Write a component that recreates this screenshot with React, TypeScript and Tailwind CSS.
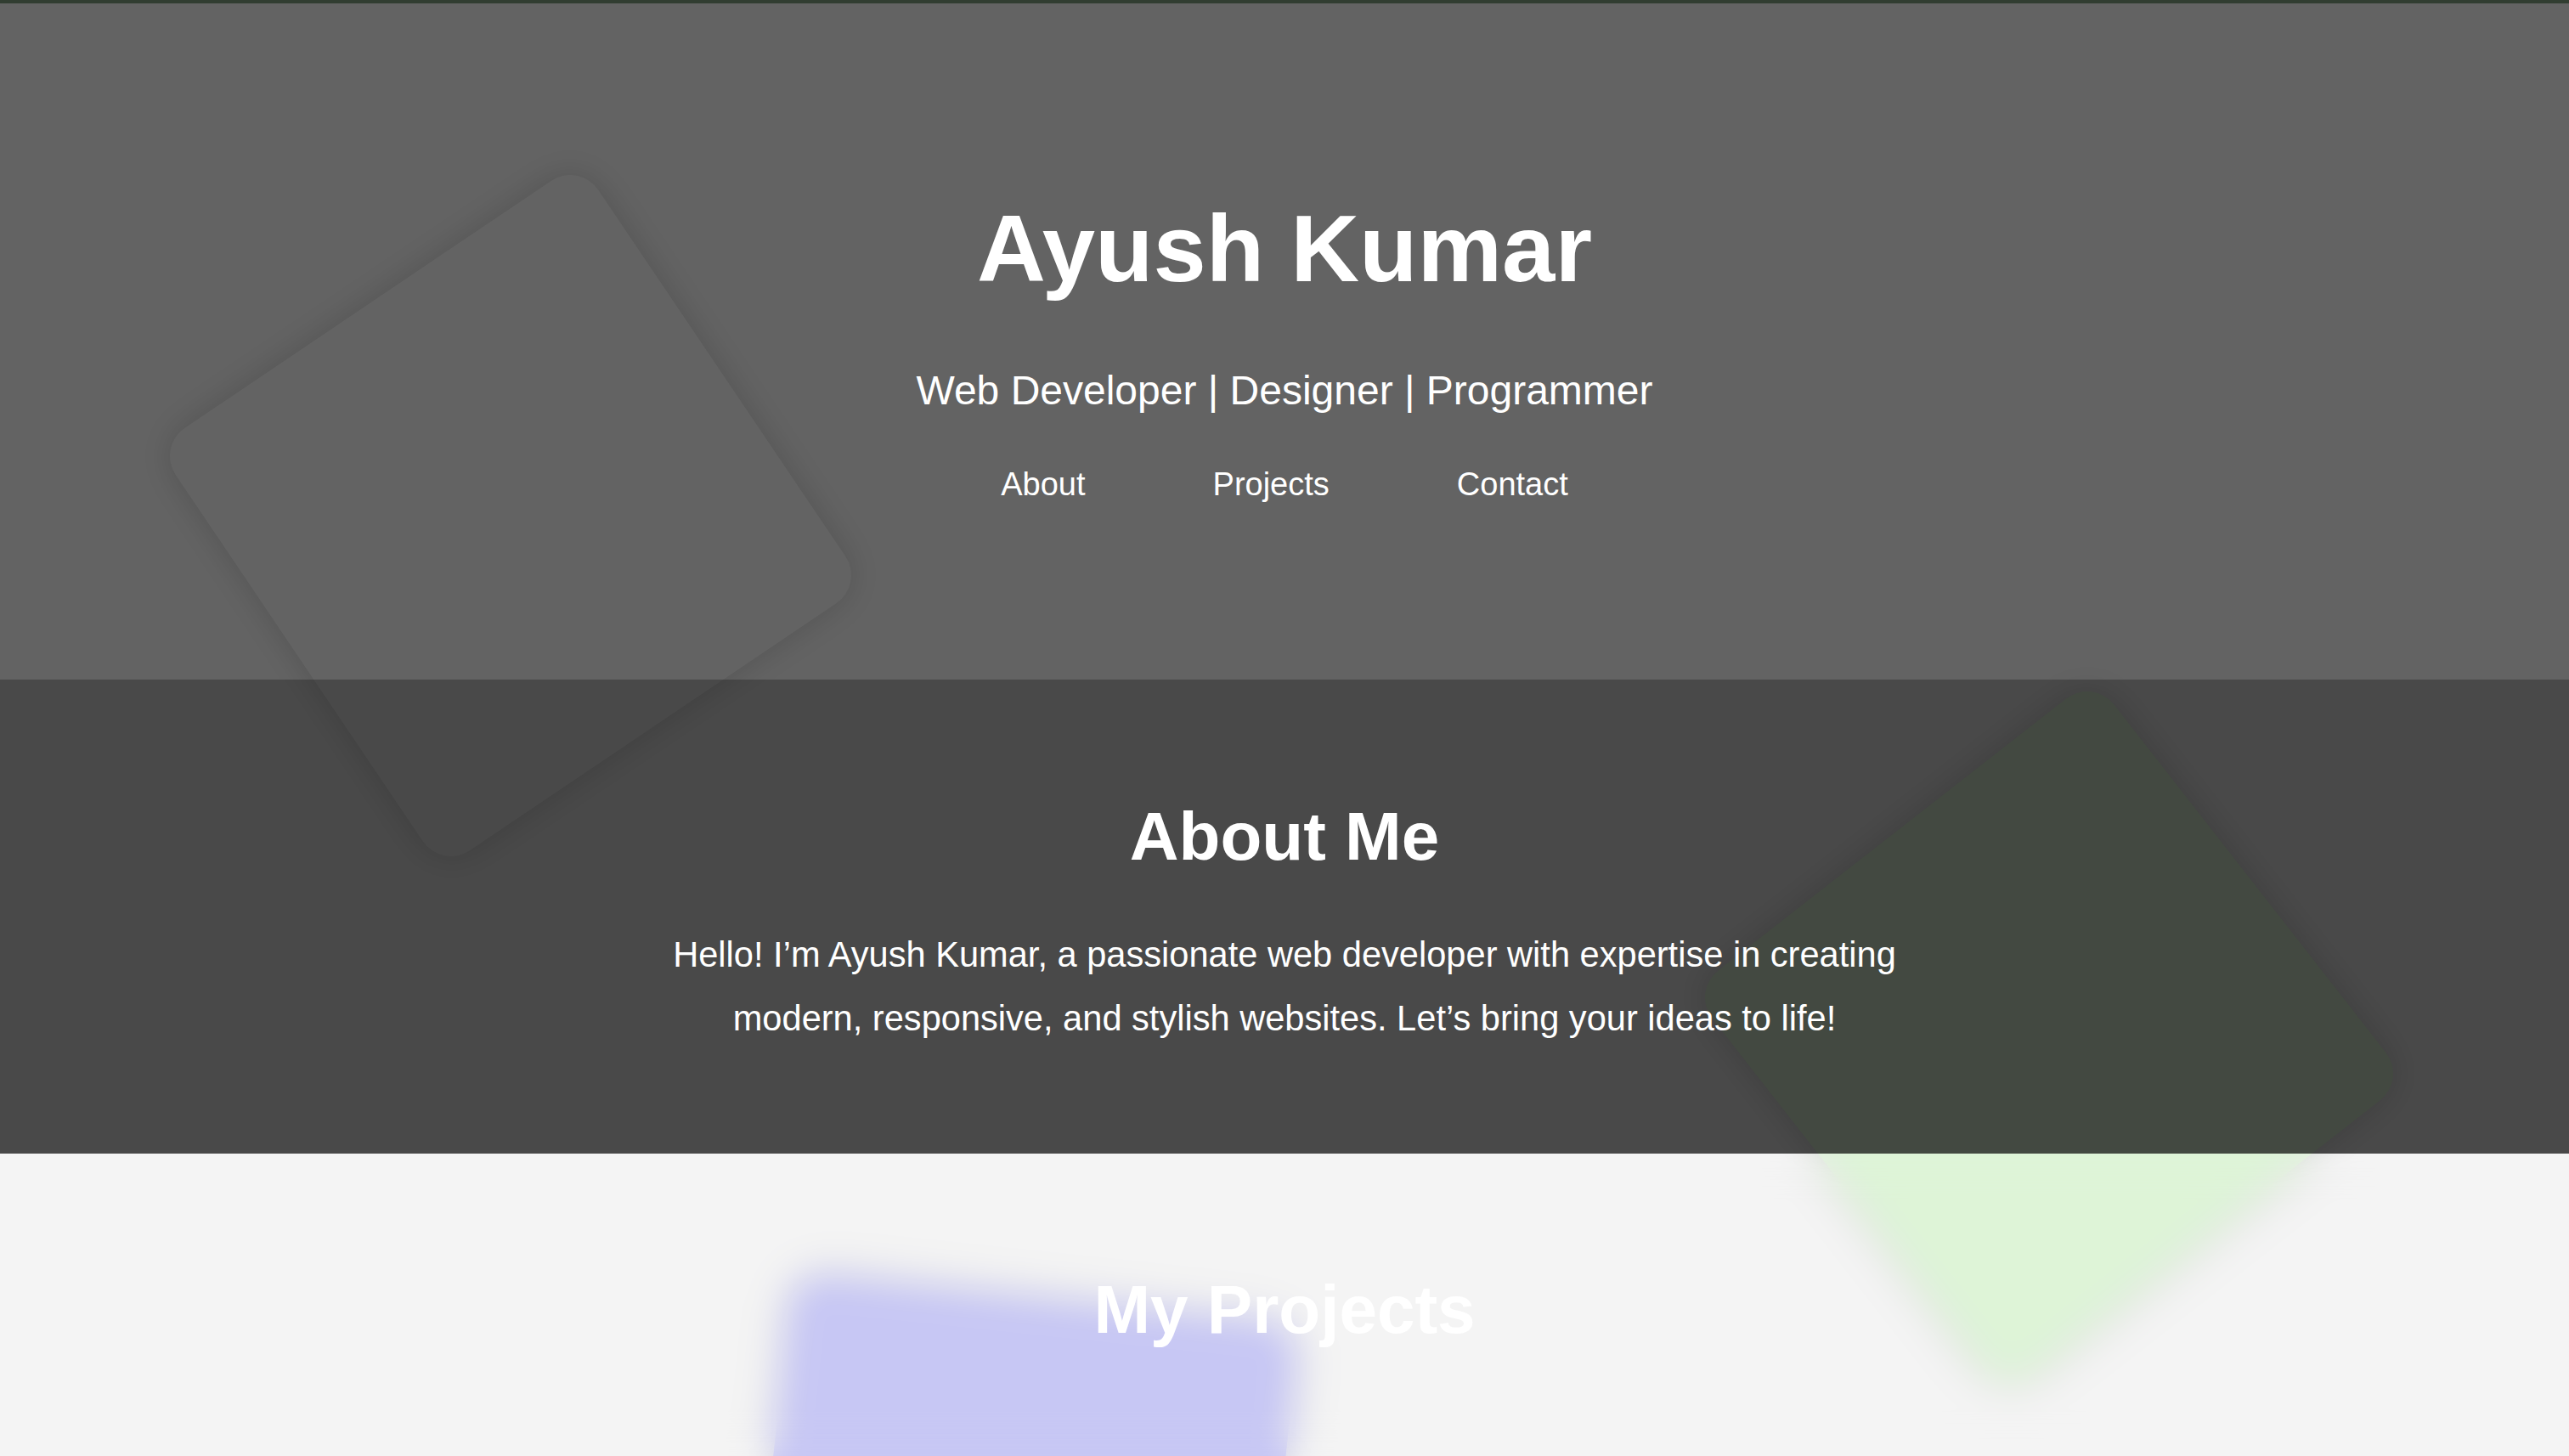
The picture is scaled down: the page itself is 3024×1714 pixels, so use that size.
import React from 'react';

const navLinks = [
  { name: 'About', href: '#about' },
  { name: 'Projects', href: '#projects' },
  { name: 'Contact', href: '#contact' },
];

const App = () => {
  return (
    <div className="relative min-h-screen overflow-hidden bg-white font-['Liberation_Sans',Arial,sans-serif] text-white">
      {/* Floating shapes, sit behind the translucent sections */}
      <div className="absolute left-[301px] top-[307px] z-0 h-[600px] w-[600px] rotate-[-34deg] rounded-[40px] bg-white shadow-[0_0_40px_rgba(0,0,0,0.16)]" />
      <div className="absolute left-[2112px] top-[919px] z-0 h-[600px] w-[600px] rotate-[-38deg] rounded-[40px] bg-[#e8ffe1] shadow-[0_0_40px_rgba(0,0,0,0.16)]" />
      <div className="absolute left-[900px] top-[1527px] z-0 h-[600px] w-[600px] rotate-[6deg] rounded-[40px] bg-[#d0d0ff] shadow-[0_0_40px_rgba(0,0,0,0.1)]" />

      {/* Top strip */}
      <div className="relative z-10 h-[4px] bg-[#313d31]" />

      {/* Hero */}
      <header className="relative z-10 flex flex-col items-center bg-[rgba(0,0,0,0.612)] pt-[233px] pb-[211px] text-center">
        <h1 className="text-[112px] font-bold leading-none">Ayush Kumar</h1>
        <p className="mt-[87px] text-[48px] font-light leading-none">
          Web Developer | Designer | Programmer
        </p>
        <nav className="mt-[67px] flex items-center gap-[150px]">
          {navLinks.map((link) => (
            <a key={link.name} href={link.href} className="text-[38px] leading-none text-white">
              {link.name}
            </a>
          ))}
        </nav>
      </header>

      {/* About */}
      <section
        id="about"
        className="relative z-10 flex flex-col items-center bg-[rgba(0,0,0,0.714)] pt-[145px] pb-[121px] text-center"
      >
        <h2 className="text-[80px] font-bold leading-none">About Me</h2>
        <p className="mt-[62px] max-w-[1500px] text-[41.6px] leading-[1.8]">
          Hello! I’m Ayush Kumar, a passionate web developer with expertise in creating modern, responsive, and
          stylish websites. Let’s bring your ideas to life!
        </p>
      </section>

      {/* Projects */}
      <section
        id="projects"
        className="relative z-10 flex min-h-[700px] flex-col items-center bg-[rgba(0,0,0,0.043)] pt-[144px] pb-[200px] text-center backdrop-blur-[22px]"
      >
        <h2 className="text-[80px] font-bold leading-none">My Projects</h2>
      </section>
    </div>
  );
};

export default App;
